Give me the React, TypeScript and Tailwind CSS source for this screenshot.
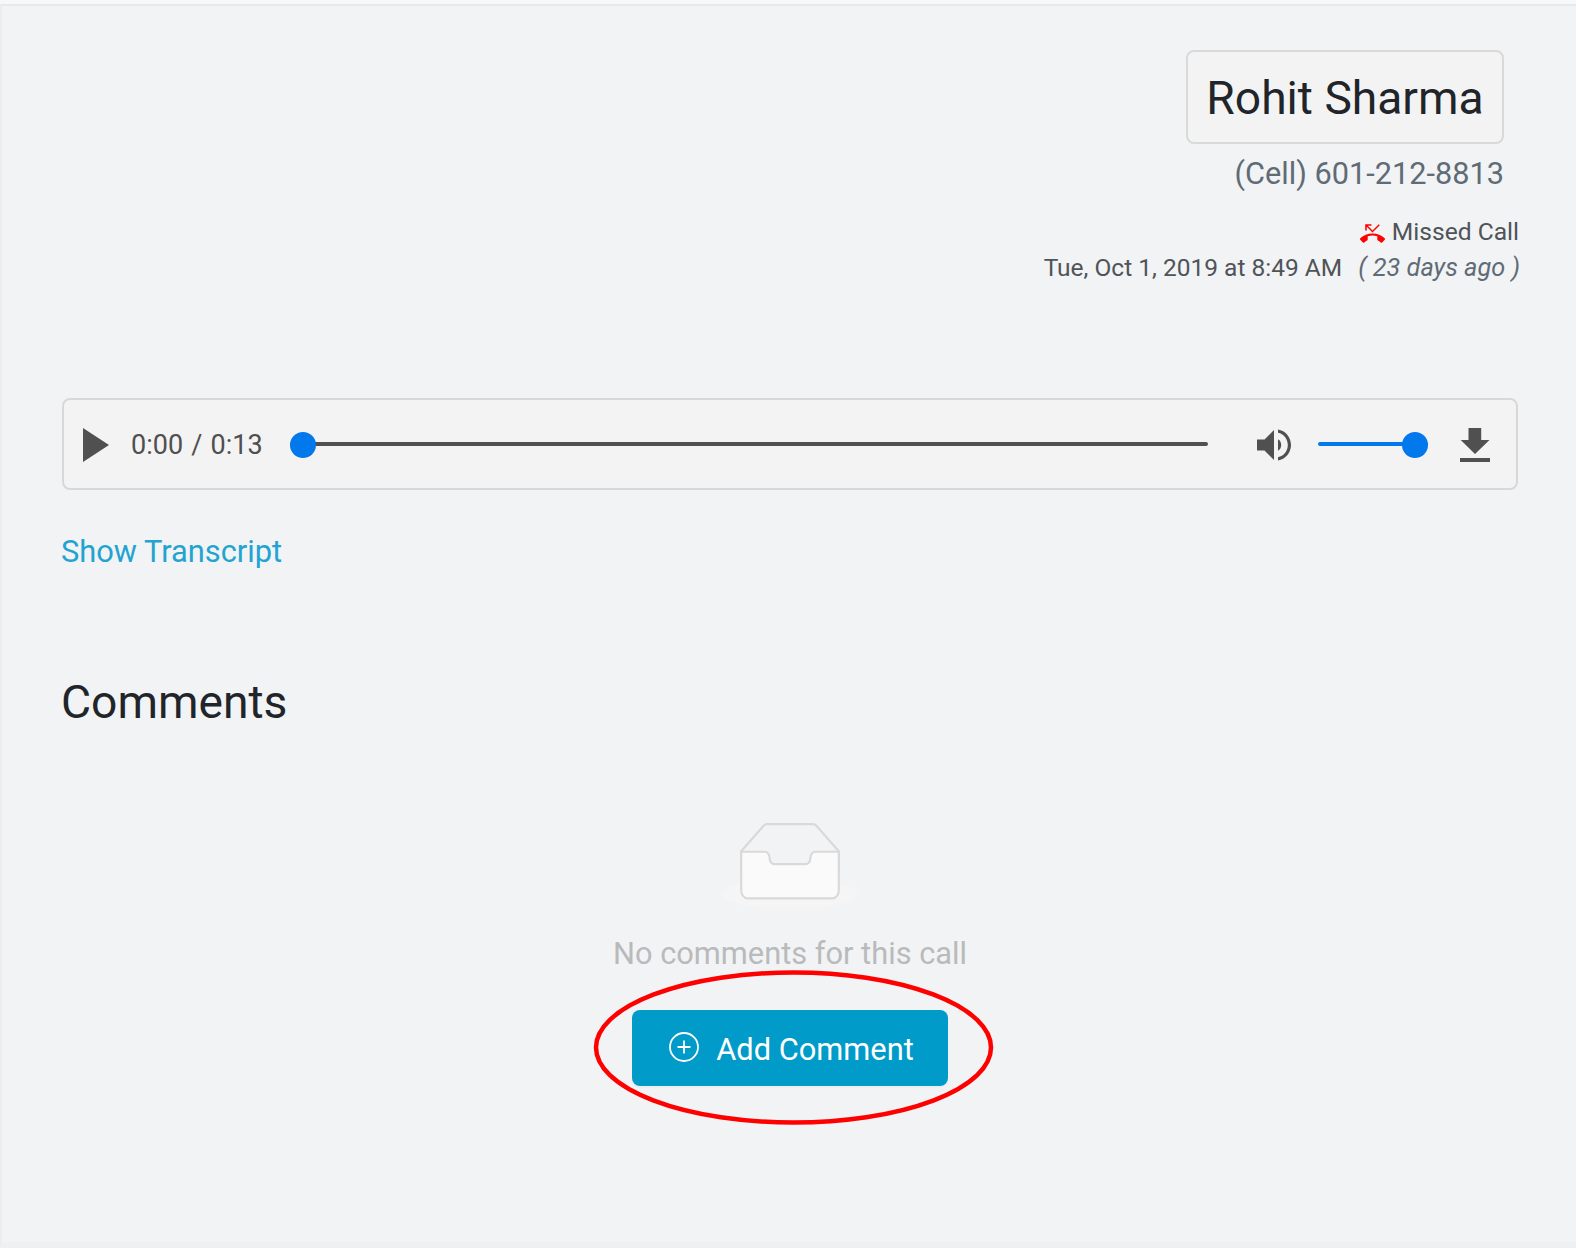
import React from "react";

const Roboto = "font-['Roboto',sans-serif]";

function PhoneMissed() {
  return (
    <svg width="25" height="25" viewBox="0 0 24 24" fill="#ff0000" className="mr-[7px] mt-[2px] shrink-0">
      <path d="M6.5 5.5L12 11l7-7-1-1-6 6-4.5-4.5H11V3H5v6h1.5V5.5zm17.21 11.17C20.66 13.78 16.54 12 12 12 7.46 12 3.34 13.78.29 16.67c-.18.18-.29.43-.29.71s.11.53.29.71l2.48 2.48c.18.18.43.29.71.29.27 0 .52-.11.7-.28.79-.74 1.69-1.36 2.66-1.85.33-.16.56-.5.56-.9v-3.1c1.45-.48 3-.73 4.6-.73s3.15.25 4.6.72v3.1c0 .39.23.74.56.9.98.49 1.87 1.12 2.67 1.85.18.18.43.28.7.28.28 0 .53-.11.71-.29l2.48-2.48c.18-.18.29-.43.29-.71s-.12-.52-.3-.7z" />
    </svg>
  );
}

function Speaker() {
  return (
    <svg width="34" height="32" viewBox="0 0 34 32" fill="#505050" className="shrink-0">
      <path d="M0 10.5h7.5L17 1v30l-9.5-9.5H0z" />
      <path d="M21 10.2c2 1 3.2 3.3 3.2 5.8S23 20.800 21 21.800z" />
      <path d="M21 0.500c7.500 1.200 13 7.700 13 15.500s-5.500 14.300-13 15.500v-3.300c5.700-1.200 9.800-6.200 9.800-12.200S26.700 5 21 3.800z" />
    </svg>
  );
}

function Download() {
  return (
    <svg width="30" height="34" viewBox="0 0 30 34" fill="#505050" className="shrink-0">
      <path d="M8.500 0h12.700v12H29.500L15 26 .7 12H8.500z" />
      <path d="M0 30h30v4H0z" />
    </svg>
  );
}

function EmptyIcon() {
  return (
    <svg width="136" height="87" viewBox="0 0 64 41">
      <g transform="translate(0 1)" fill="none" fillRule="evenodd">
        <ellipse fill="#f5f5f5" cx="32" cy="33" rx="32" ry="7" />
        <g fillRule="nonzero" stroke="#d9d9d9">
          <path d="M55 12.76L44.854 1.258C44.367.474 43.656 0 42.907 0H21.093c-.749 0-1.46.474-1.947 1.257L9 12.761V22h46v-9.24z" />
          <path
            d="M41.613 15.931c0-1.605.994-2.93 2.227-2.931H55v18.137C55 33.26 53.68 35 52.05 35h-40.1C10.32 35 9 33.259 9 31.137V13h11.16c1.233 0 2.227 1.323 2.227 2.928v.022c0 1.605 1.005 2.901 2.237 2.901h14.752c1.232 0 2.237-1.308 2.237-2.913v-.007z"
            fill="#fafafa"
          />
        </g>
      </g>
    </svg>
  );
}

function PlusCircle() {
  return (
    <svg width="30" height="30" viewBox="0 0 30 30" fill="none" stroke="#ffffff" className="shrink-0">
      <circle cx="15" cy="15" r="14" strokeWidth="1.8" />
      <path d="M15 8.500v13M8.500 15h13" strokeWidth="1.800" />
    </svg>
  );
}

export default function App() {
  return (
    <div className={`${Roboto} relative h-[1248px] w-full overflow-hidden bg-[#f2f3f5] text-[#212529]`}>
      <div className="h-[4px] bg-[#f7f8fa]" />
      <div className="h-[1244px] border-l-2 border-t-2 border-b-[6px] border-l-[#ecedef] border-t-[#e8e9eb] border-b-[#eff0f2] pl-[60px] pr-[58px]">
        {/* Header */}
        <div className="flex flex-col items-end pt-[44px]">
          <div className="mr-[14px] flex h-[94px] w-[318px] items-center justify-center rounded-[8px] border-2 border-[#d8d9da] bg-[#f3f3f4] pt-[2px] text-[46.2px] leading-none">
            Rohit Sharma
          </div>
          <div className="mr-[14px] mt-[12px] h-[36px] text-[30.7px] leading-[36px] text-[#5f6b75]">
            (Cell) 601-212-8813
          </div>
          <div className="-mr-[1px] mt-[22px] flex h-[36px] items-center text-[24.6px] text-[#4f5459]">
            <PhoneMissed />
            <span>Missed Call</span>
          </div>
          <div className="-mr-[2px] flex h-[36px] items-center text-[24.5px] text-[#4f5459]">
            <span>Tue, Oct 1, 2019 at 8:49 AM</span>
            <span className="ml-[16px] text-[25.3px] italic text-[#5f6b75]">( 23 days ago )</span>
          </div>
        </div>

        {/* Audio */}
        <div className="mt-[112px] flex h-[92px] items-center rounded-[8px] border-2 border-[#d8d8d8] bg-[#f3f3f4] pl-[19px] pr-[25px]">
          <svg width="26" height="34" viewBox="0 0 26 34" fill="#505050" className="mt-[1px] shrink-0">
            <path d="M0 0l26 17L0 34z" />
          </svg>
          <span className="ml-[22px] mt-[2px] w-[159px] shrink-0 whitespace-pre text-[27px] text-[#4f4f4f] [word-spacing:1.5px]">0:00 / 0:13</span>
          <div className="relative h-[4px] w-[918px] shrink-0 rounded-full bg-[#505050]">
            <div className="absolute left-0 top-[-10px] h-[26px] w-[26px] rounded-full bg-[#0179ec]" />
          </div>
          <div className="ml-[49px] mt-[1px]">
            <Speaker />
          </div>
          <div className="relative ml-[27px] h-[4px] w-[110px] shrink-0 rounded-full bg-[#0179ec]">
            <div className="absolute right-0 top-[-10px] h-[26px] w-[26px] rounded-full bg-[#0179ec]" />
          </div>
          <div className="ml-[32px] mt-[1px]">
            <Download />
          </div>
        </div>

        <div className="-ml-[1px] mt-[42px] h-[40px] text-[30.8px] leading-[40px] text-[#22a3d1]">Show Transcript</div>

        <div className="-ml-[1px] mt-[102px] h-[56px] text-[46.2px] leading-[56px]">Comments</div>

        {/* Empty */}
        <div className="mt-[92px] flex flex-col items-center">
          <EmptyIcon />
          <div className="mt-[25px] h-[40px] text-[30.8px] leading-[40px] text-[#b9babb]">No comments for this call</div>
          <button className="mt-[36px] flex h-[76px] w-[316px] items-center justify-center rounded-[8px] bg-[#009bc9] text-[30.8px] text-white shadow-[0_2px_0_rgba(0,0,0,0.02)]">
            <span className="mb-[2px] ml-[3px]">
              <PlusCircle />
            </span>
            <span className="ml-[17px] mt-[4px]">Add Comment</span>
          </button>
        </div>
      </div>

      {/* Hand-drawn annotation */}
      <svg className="absolute left-[590px] top-[966px]" width="408" height="164" viewBox="0 0 408 164" fill="none">
        <ellipse cx="203.500" cy="81.500" rx="197.500" ry="75" stroke="#ff0000" strokeWidth="4.500" />
      </svg>
    </div>
  );
}
